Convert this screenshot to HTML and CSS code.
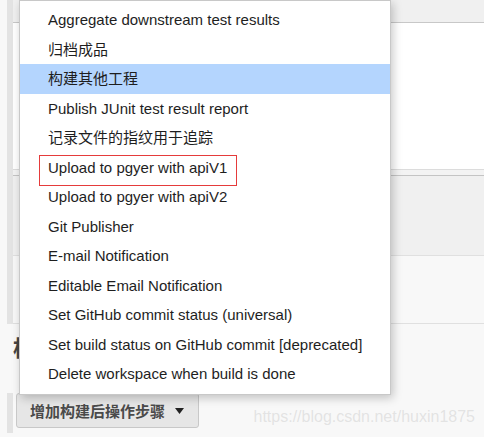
FILE: index.html
```html
<!DOCTYPE html>
<html lang="zh-CN">
<head>
  <meta charset="UTF-8">
  <meta name="viewport" content="width=device-width, initial-scale=1.0">
  <title>构建后操作</title>
  <link rel="stylesheet" href="styles.css">
</head>
<body>

  <!-- Fundo: formulário de configuração -->
  <div class="config">
    <div class="row row-top"></div>
    <div class="row row-white"></div>
    <div class="row row-grey"></div>
    <div class="row row-light"></div>
  </div>

  <div class="post-build">
    <h2>构建后操作</h2>
    <div class="add-step">
      <button class="add-btn">增加构建后操作步骤
        <svg class="caret" width="9" height="6" viewBox="0 0 9 6"><path d="M0 0h9L4.5 6z" fill="#222"/></svg>
      </button>
    </div>
  </div>

  <!-- Menu aberto -->
  <ul class="menu">
    <li class="item">Aggregate downstream test results</li>
    <li class="item">归档成品</li>
    <li class="item active">构建其他工程</li>
    <li class="item">Publish JUnit test result report</li>
    <li class="item">记录文件的指纹用于追踪</li>
    <li class="item marked">Upload to pgyer with apiV1</li>
    <li class="item">Upload to pgyer with apiV2</li>
    <li class="item">Git Publisher</li>
    <li class="item">E-mail Notification</li>
    <li class="item">Editable Email Notification</li>
    <li class="item">Set GitHub commit status (universal)</li>
    <li class="item">Set build status on GitHub commit [deprecated]</li>
    <li class="item">Delete workspace when build is done</li>
  </ul>

  <div class="watermark">https://blog.csdn.net/huxin1875</div>

</body>
</html>
```

FILE: styles.css
```css
/* Corpo da página */
body {
  margin: 0;
  font-family: "Liberation Sans", "Noto Sans CJK SC", sans-serif;
  background: #f8f8f8;
  color: #222;
  height: 437px;
  overflow: hidden;
  position: relative;
}

/* Blocos do formulário ao fundo */
.config {
  margin-left: 7px;
  border-left: 6px solid #e3e3e3;
  background: #f3f3f3;
}

.row-top {
  height: 22px;
  background: #f0f0f0;
  border-bottom: 1px solid #c8c8c8;
}

.row-white {
  height: 146px;
  background: #fff;
  border-bottom: 1px solid #dcdcdc;
  margin-bottom: 5px;
}

.row-grey {
  height: 79px;
  background: #f0f0f0;
  border-top: 1px solid #c4c4c4;
  border-bottom: 1px solid #e0e0e0;
}

.row-light {
  height: 67px;
  background: #f8f8f8;
  border-bottom: 1px solid #e0e0e0;
}

/* Seção de ações pós-build (o título fica atrás do menu) */
.post-build {
  padding-top: 11px;
}

.post-build h2 {
  margin: 0 0 0 13px;
  font-size: 22px;
  line-height: 28px;
  font-weight: bold;
  color: #444;
}

.add-step {
  margin: 30px 0 0 7px;
  border-left: 6px solid #e3e3e3;
  padding-left: 3px;
  height: 40px;
}

.add-btn {
  height: 35px;
  padding: 0 14px 0 13px;
  font-family: inherit;
  font-size: 15px;
  font-weight: bold;
  color: #4a4a4a;
  background: #e6e6e6;
  border: 1px solid #c8c8c8;
  border-radius: 3px;
  display: flex;
  align-items: center;
  gap: 10px;
}

/* Menu suspenso */
.menu {
  position: absolute;
  top: 0;
  left: 19px;
  width: 370px;
  margin: 0;
  padding: 4px 0 5px;
  list-style: none;
  background: #fff;
  border: 1px solid #c8c8c8;
  box-shadow: 2px 3px 9px rgba(0, 0, 0, 0.22);
}

.item {
  position: relative;
  height: 29.5px;
  line-height: 29.5px;
  padding-left: 28px;
  font-size: 15px;
  color: #1e1e1e;
  white-space: nowrap;
}

.item.active {
  background: #b4d5fe;
}

/* Destaque em vermelho */
.item.marked::after {
  content: "";
  position: absolute;
  left: 19px;
  top: 2px;
  width: 196px;
  height: 29px;
  border: 1px solid #e53b3b;
}

/* Marca d'água */
.watermark {
  position: absolute;
  right: 9px;
  top: 408px;
  font-size: 16px;
  color: rgba(200, 200, 200, 0.45);
}
```
